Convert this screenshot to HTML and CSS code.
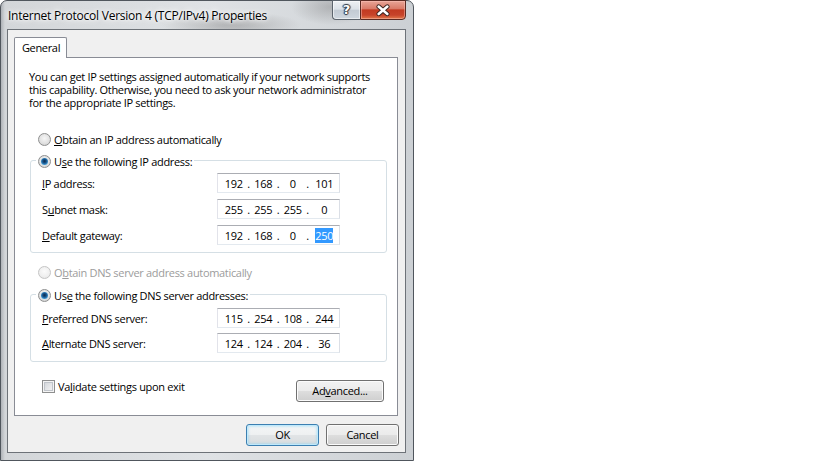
FILE: index.html
```html
<!DOCTYPE html>
<html>
<head>
<meta charset="utf-8">
<title>IPv4 Properties</title>
<link rel="stylesheet" href="styles.css">
</head>
<body>
<div class="window">
  <div class="titlebar">
    <div class="title">Internet Protocol Version 4 (TCP/IPv4) Properties</div>
    <div class="caption">
      <div class="cap-btn help"><span>?</span></div>
      <div class="cap-btn close">
        <svg width="45" height="19" viewBox="0 0 45 19">
          <path d="M18 5.5 L27 13 M27 5.5 L18 13" stroke="#3a2420" stroke-width="4.6" stroke-linecap="round" fill="none"/>
          <path d="M18 5.5 L27 13 M27 5.5 L18 13" stroke="#ffffff" stroke-width="2.6" stroke-linecap="round" fill="none"/>
        </svg>
      </div>
    </div>
  </div>
  <div class="client">
    <div class="tabs"><div class="tab">General</div></div>
    <div class="panel">
      <p class="intro">You can get IP settings assigned automatically if your network supports<br>this capability. Otherwise, you need to ask your network administrator<br>for the appropriate IP settings.</p>
      <div class="option opt-ip"><span class="radio"></span><span><u>O</u>btain an IP address automatically</span></div>
      <fieldset class="group g1">
        <legend><span class="option"><span class="radio checked"></span><span>U<u>s</u>e the following IP address:</span></span></legend>
        <div class="fields">
          <div class="row"><span class="flabel"><u>I</u>P address:</span><div class="ip"><span class="oct">192</span><span class="dot">.</span><span class="oct">168</span><span class="dot">.</span><span class="oct">0</span><span class="dot">.</span><span class="oct last">101</span></div></div>
          <div class="row"><span class="flabel">S<u>u</u>bnet mask:</span><div class="ip"><span class="oct">255</span><span class="dot">.</span><span class="oct">255</span><span class="dot">.</span><span class="oct">255</span><span class="dot">.</span><span class="oct last">0</span></div></div>
          <div class="row"><span class="flabel"><u>D</u>efault gateway:</span><div class="ip"><span class="oct">192</span><span class="dot">.</span><span class="oct">168</span><span class="dot">.</span><span class="oct">0</span><span class="dot">.</span><span class="oct last"><span class="sel">250</span></span></div></div>
        </div>
      </fieldset>
      <div class="option opt-dns disabled"><span class="radio"></span><span>O<u>b</u>tain DNS server address automatically</span></div>
      <fieldset class="group g2">
        <legend><span class="option"><span class="radio checked"></span><span>Us<u>e</u> the following DNS server addresses:</span></span></legend>
        <div class="fields">
          <div class="row"><span class="flabel"><u>P</u>referred DNS server:</span><div class="ip"><span class="oct">115</span><span class="dot">.</span><span class="oct">254</span><span class="dot">.</span><span class="oct">108</span><span class="dot">.</span><span class="oct last">244</span></div></div>
          <div class="row"><span class="flabel"><u>A</u>lternate DNS server:</span><div class="ip"><span class="oct">124</span><span class="dot">.</span><span class="oct">124</span><span class="dot">.</span><span class="oct">204</span><span class="dot">.</span><span class="oct last">36</span></div></div>
        </div>
      </fieldset>
      <div class="bottom-row">
        <div class="check-opt"><span class="checkbox"></span><span>Va<u>l</u>idate settings upon exit</span></div>
        <button class="btn advanced">Ad<u>v</u>anced...</button>
      </div>
    </div>
    <div class="buttons">
      <button class="btn default">OK</button>
      <button class="btn">Cancel</button>
    </div>
  </div>
</div>
</body>
</html>
```

FILE: styles.css
```css
* { box-sizing: border-box; }

body {
  margin: 0;
  background: #ffffff;
  font-family: "Open Sans", "Noto Sans", sans-serif;
  font-size: 11px;
  letter-spacing: -0.32px;
  color: #000000;
}

u { text-decoration: underline; text-underline-offset: 1px; }

.window {
  width: 414px;
  height: 461px;
  border: 1px solid #50565d;
  border-radius: 7px 7px 0 0;
  padding: 0 7px 7px 6px;
  display: flex;
  flex-direction: column;
  background:
    radial-gradient(ellipse 70px 14px at 230px 24px, rgba(120,120,120,0.45), rgba(120,120,120,0)),
    radial-gradient(ellipse 40px 18px at 330px 6px, rgba(110,110,110,0.35), rgba(110,110,110,0)),
    linear-gradient(90deg, #aeb2b7 0px, #d3d6d9 4px, #dfe2e5 50%, #ccd0d4 100%);
}

.titlebar {
  height: 28px;
  flex: none;
  display: flex;
  justify-content: space-between;
  align-items: flex-start;
}

.title {
  padding: 7px 0 0 1px;
  line-height: 15px;
  font-size: 12px;
  letter-spacing: -0.24px;
  text-shadow: 0 0 6px #ffffff, 0 0 3px #ffffff, 0 0 10px #ffffff;
  white-space: nowrap;
}

.caption {
  display: flex;
  margin-top: -1px;
}

.cap-btn {
  height: 20px;
  border: 1px solid #5c646d;
  display: flex;
  align-items: center;
  justify-content: center;
}

.help {
  width: 28px;
  border-right: none;
  border-radius: 0 0 0 4px;
  background: linear-gradient(#eef1f4 0%, #dce2e8 45%, #c3cbd4 52%, #cfd7df 100%);
  box-shadow: inset 0 0 0 1px rgba(255,255,255,0.55);
}

.help span {
  color: #ffffff;
  font-family: "DejaVu Sans", sans-serif;
  font-weight: bold;
  font-size: 13px;
  line-height: 14px;
  letter-spacing: 0;
  text-shadow: 0 0 1px #2c3440, 1px 0 1px #2c3440, -1px 0 1px #2c3440, 0 1px 1px #2c3440, 0 -1px 1px #2c3440;
}

.close {
  width: 46px;
  border-color: #5a2a22;
  border-radius: 0 0 4px 0;
  background: linear-gradient(#e8a597 0%, #d97b69 42%, #c23b22 50%, #c7432a 78%, #e27a4c 100%);
  box-shadow: inset 0 0 0 1px rgba(255,200,190,0.45);
}

.close svg { display: block; }

.client {
  flex: 1;
  border: 1px solid #6d7278;
  background: #f0f0f0;
  display: flex;
  flex-direction: column;
  padding: 7px 6px 6px 6px;
}

.tabs {
  height: 20px;
  flex: none;
  display: flex;
  position: relative;
  z-index: 1;
}

.tab {
  width: 53px;
  height: 21px;
  border: 1px solid #898c95;
  border-bottom: none;
  border-radius: 2px 2px 0 0;
  background: #ffffff;
  text-align: center;
  line-height: 19px;
  padding-left: 1px;
}

.panel {
  height: 359px;
  flex: none;
  margin: 0 1px 0 0;
  border: 1px solid #898c95;
  background: #ffffff;
  display: flex;
  flex-direction: column;
}

.intro {
  margin: 12px 0 0 14px;
  line-height: 13px;
  white-space: nowrap;
}

.option {
  display: inline-flex;
  align-items: center;
  height: 17px;
  gap: 3px;
  white-space: nowrap;
}

.opt-ip { margin: 22px 0 0 23px; align-self: flex-start; }
.opt-dns { margin: 11px 0 0 23px; align-self: flex-start; }

.disabled { color: #9c9c9c; }

.radio {
  width: 13px;
  height: 13px;
  flex: none;
  border-radius: 50%;
  border: 1px solid #8e8f8f;
  background: radial-gradient(circle at 50% 40%, #f6f6f6 0%, #e2e2e2 55%, #c8c8c8 100%);
  display: flex;
  align-items: center;
  justify-content: center;
}

.disabled .radio {
  border-color: #c5c5c5;
  background: radial-gradient(circle at 50% 40%, #fbfbfb 0%, #efefef 60%, #e0e0e0 100%);
}

.radio.checked::after {
  content: "";
  width: 7px;
  height: 7px;
  border-radius: 50%;
  background: radial-gradient(circle at 50% 45%, #0b2a48 0%, #174f86 35%, #3d98d3 70%, #8fdaf7 100%);
}

.group {
  margin: 4px 10px 0 15px;
  border: 1px solid #d5dfe5;
  border-radius: 3px;
  padding: 4px 0 7px 0;
  min-width: 0;
}

.g2 { margin-top: 5px; padding-top: 5px; padding-bottom: 8px; }
.g2 .fields { gap: 5px; }

.group legend {
  margin-left: 5px;
  padding: 0 2px;
  height: 17px;
  line-height: 17px;
}

.fields {
  display: flex;
  flex-direction: column;
  gap: 6px;
}

.row {
  display: flex;
  align-items: center;
  height: 20px;
  padding-left: 11px;
}

.flabel {
  width: 175px;
  flex: none;
  white-space: nowrap;
}

.ip {
  width: 123px;
  height: 20px;
  border: 1px solid;
  border-color: #abadb3 #dbdfe6 #e3e9ef #e2e3ea;
  background: #ffffff;
  display: flex;
  align-items: center;
  padding-left: 3px;
}

.oct {
  width: 25.5px;
  flex: none;
  text-align: center;
  line-height: 15px;
}

.oct.last { flex: 1; width: auto; }

.dot {
  width: 4px;
  flex: none;
  text-align: center;
}

.sel {
  background: #3399ff;
  color: #ffffff;
  display: inline-block;
  line-height: 15px;
}

.bottom-row {
  margin: 18px 13px 0 27px;
  display: flex;
  justify-content: space-between;
  align-items: flex-start;
}

.check-opt {
  display: flex;
  align-items: center;
  gap: 3px;
  height: 13px;
  white-space: nowrap;
}

.checkbox {
  width: 13px;
  height: 13px;
  flex: none;
  border: 1px solid #8e8f8f;
  background: linear-gradient(135deg, #cdd1d6 0%, #e8e9eb 60%, #f7f7f7 100%);
  box-shadow: inset 0 0 0 1px #f4f4f4, inset 0 0 0 2px #c0c4ca;
}

.btn {
  height: 22px;
  border: 1px solid #707070;
  border-radius: 3px;
  background: linear-gradient(#f2f2f2 0%, #ebebeb 48%, #dddddd 52%, #cfcfcf 100%);
  box-shadow: inset 0 0 0 1px #fbfbfb;
  font-family: inherit;
  font-size: 11px;
  letter-spacing: inherit;
  color: #000000;
  padding: 0;
  line-height: 18px;
}

.advanced { width: 88px; height: 22px; }

.buttons {
  margin-top: 8px;
  height: 22px;
  flex: none;
  display: flex;
  justify-content: flex-end;
  gap: 7px;
}

.buttons .btn { width: 73px; }

.btn.default {
  border-color: #3c7fb1;
  box-shadow: inset 0 0 0 1px #bfe9fb, inset 0 0 2px 2px rgba(120,205,245,0.35);
  background: linear-gradient(#f4f6f7 0%, #eef0f1 48%, #e1e4e6 52%, #d8dcde 100%);
}
```
